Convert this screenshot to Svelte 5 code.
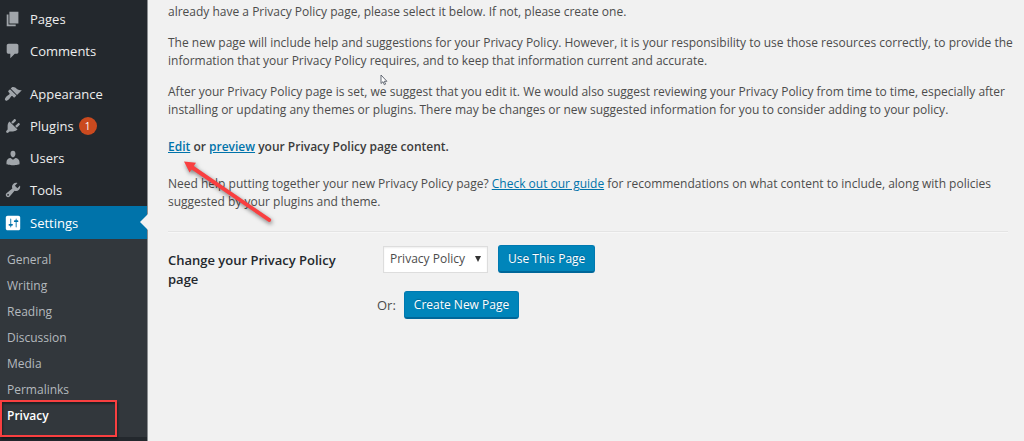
<script>
  const groups = [
    [
      { name: 'Pages', icon: 'pages' },
      { name: 'Comments', icon: 'comments' }
    ],
    [
      { name: 'Appearance', icon: 'appearance' },
      { name: 'Plugins', icon: 'plugins', count: 1 },
      { name: 'Users', icon: 'users' },
      { name: 'Tools', icon: 'tools' },
      { name: 'Settings', icon: 'settings', current: true }
    ]
  ];
  const settings = ['General', 'Writing', 'Reading', 'Discussion', 'Media', 'Permalinks', 'Privacy'];
  const icons = {
    pages: 'M6 15V2h10v13H6zm-1 1h8v2H3V5h2v11z',
    comments: 'M5 2h9q.82 0 1.41.59T16 4v7q0 .82-.59 1.41T14 13h-2l-5 5v-5H5q-.82 0-1.41-.59T3 11V4q0-.82.59-1.41T5 2z',
    appearance: 'M14.48 11.06L7.41 3.99l1.5-1.5c.5-.56 2.3-.47 3.51.32 1.21.8 1.43 1.28 2.91 2.1 1.18.64 2.45 1.26 4.45.85zm-.71.71L6.7 4.7 4.93 6.47c-.39.39-.39 1.02 0 1.41l1.06 1.06c.39.39.39 1.03 0 1.42-.6.6-1.43 1.11-2.21 1.69-.35.26-.7.53-1.01.84C1.43 14.23.4 16.08 1.4 17.07c.99 1 2.84-.03 4.18-1.36.31-.31.58-.66.85-1.02.57-.78 1.08-1.61 1.69-2.21.39-.39 1.02-.39 1.41 0l1.06 1.06c.39.39 1.02.39 1.41 0z',
    plugins: 'M13.11 4.36L9.87 7.6 8 5.73l3.24-3.24c.35-.34 1.05-.2 1.56.32.52.51.66 1.21.31 1.55zm-8 1.77l.91-1.12 9.01 9.01-1.19.84c-.71.71-2.63 1.16-3.82 1.16H6.14L4.9 17.26c-.59.59-1.54.59-2.12 0-.59-.58-.59-1.53 0-2.12l1.24-1.24v-3.88c0-1.13.4-3.19 1.09-3.89zm7.26 3.97l3.24-3.24c.34-.35 1.04-.21 1.55.31.52.51.66 1.21.31 1.55l-3.24 3.25z',
    users: 'M10 9.25c-2.27 0-2.73-3.44-2.73-3.44C7 4.02 7.82 2 9.97 2c2.16 0 2.98 2.02 2.71 3.81 0 0-.41 3.44-2.68 3.44zm0 2.57L12.72 10c2.39 0 4.52 2.33 4.52 4.53v2.49s-3.65 1.13-7.24 1.13c-3.65 0-7.24-1.13-7.24-1.13v-2.49c0-2.25 1.94-4.48 4.47-4.48z',
    tools: 'M16.68 9.77c-1.34 1.34-3.3 1.67-4.95.99l-5.41 6.52c-.99.99-2.59.99-3.58 0s-.99-2.59 0-3.57l6.52-5.42c-.68-1.65-.35-3.61.99-4.95 1.28-1.28 3.12-1.62 4.72-1.06l-2.89 2.89 2.82 2.82 2.86-2.87c.53 1.58.18 3.39-1.08 4.65zM3.81 16.21c.4.39 1.04.39 1.43 0 .4-.4.4-1.04 0-1.43-.39-.4-1.03-.4-1.43 0-.39.39-.39 1.03 0 1.43z',
    settings: 'M18 16V4c0-1.1-.9-2-2-2H4c-1.1 0-2 .9-2 2v12c0 1.1.9 2 2 2h12c1.1 0 2-.9 2-2zM8 11h1c.55 0 1 .45 1 1s-.45 1-1 1H8v1.5c0 .28-.22.5-.5.5s-.5-.22-.5-.5V13H6c-.55 0-1-.45-1-1s.45-1 1-1h1V5.500c0-.28.22-.5.5-.5s.5.22.5.5V11zm5-2h-1c-.55 0-1-.45-1-1s.45-1 1-1h1V5.500c0-.28.22-.5.5-.5s.5.22.5.5V7h1c.55 0 1 .45 1 1s-.45 1-1 1h-1v5.500c0 .28-.22.5-.5.5s-.5-.22-.5-.5V9z'
  };
  let page = $state('Privacy Policy');
</script>

<div class="admin">
  <nav class="sidebar" aria-label="Main menu">
    {#each groups as group}
      <ul class="menu">
        {#each group as item}
          <li>
            <a href="#{item.icon}" class="item" class:current={item.current}>
              <svg viewBox="0 0 20 20" aria-hidden="true"><path d={icons[item.icon]} /></svg>
              <span>{item.name}</span>
              {#if item.count}<span class="count">{item.count}</span>{/if}
            </a>
          </li>
        {/each}
      </ul>
    {/each}
    <ul class="submenu">
      {#each settings as name}
        <li><a href="#{name}" class:active={name === 'Privacy'}>{name}</a></li>
      {/each}
    </ul>
    <div class="frame"></div>
  </nav>

  <main>
    <div class="intro">
      <p>already have a Privacy Policy page, please select it below. If not, please create one.</p>
      <p>The new page will include help and suggestions for your Privacy Policy. However, it is your responsibility to use those resources correctly, to provide the information that your Privacy Policy requires, and to keep that information current and accurate.</p>
      <p>After your Privacy Policy page is set, we suggest that you edit it. We would also suggest reviewing your Privacy Policy from time to time, especially after installing or updating any themes or plugins. There may be changes or new suggested information for you to consider adding to your policy.</p>
      <p class="strong"><a href="#edit">Edit</a> or <a href="#preview">preview</a> your Privacy Policy page content.</p>
      <p>Need help putting together your new Privacy Policy page? <a href="#guide">Check out our guide</a> for recommendations on what content to include, along with policies suggested by your plugins and theme.</p>
    </div>
    <hr />
    <div class="form">
      <label for="policy-page">Change your Privacy Policy page</label>
      <div class="fields">
        <div class="row">
          <span class="picker">
            <select id="policy-page" bind:value={page}>
              <option>Privacy Policy</option>
            </select>
            <svg viewBox="0 0 6 6" aria-hidden="true"><path d="M0 0h6L3 6z" /></svg>
          </span>
          <button type="button">Use This Page</button>
        </div>
        <div class="row create">
          <span>Or:</span>
          <button type="button">Create New Page</button>
        </div>
      </div>
    </div>
  </main>

  <svg class="pointer" viewBox="0 0 8 12" aria-hidden="true">
    <path d="M1 1v8.500l2-1.800 1.300 3 1.300-.6-1.300-2.800h2.600z" fill="#fff" stroke="#555b66" stroke-width=".9" />
  </svg>
  <svg class="arrow" viewBox="0 0 100 70" aria-hidden="true">
    <path d="M4 5.500l12 1.200-2.200 3.400L90.500 62.500q1.200 1 .4 2.400t-2.400.8L11.600 13.500 9.600 16.500z" />
  </svg>
</div>

<style>
  :global(body) {
    margin: 0;
    background: #f1f1f1;
  }
  .admin {
    position: relative;
    display: flex;
    min-height: 100vh;
    overflow: hidden;
    box-sizing: border-box;
    font: 12px/18px "Open Sans", "Noto Sans", sans-serif;
    color: #4c4c4c;
  }
  .sidebar {
    position: relative;
    flex: 0 0 148px;
    padding-top: 3px;
    box-sizing: border-box;
    background: #23282d;
    border-right: 1px solid #8b8e91;
    font-size: 13px;
  }
  ul {
    margin: 0;
    padding: 0;
    list-style: none;
  }
  .menu + .menu {
    margin-top: 11px;
  }
  .item {
    position: relative;
    display: flex;
    align-items: center;
    height: 32px;
    padding-left: 4px;
    color: #eee;
    text-decoration: none;
  }
  .item svg {
    width: 18px;
    height: 18px;
    margin-right: 8px;
    fill: #a0a5aa;
  }
  .current {
    height: 33px;
    background: #0073aa;
    color: #fff;
  }
  .current svg {
    fill: #fff;
  }
  .current::after {
    content: "";
    position: absolute;
    right: -1px;
    top: 8px;
    border: 8px solid transparent;
    border-left: 0;
    border-right-color: #f1f1f1;
  }
  .count {
    width: 18px;
    margin-left: 5px;
    border-radius: 9px;
    background: #ca4a1f;
    color: #fff;
    font-size: 10px;
    text-align: center;
  }
  .submenu {
    padding: 8px 0;
    background: #32373c;
    font-size: 12px;
    line-height: 26px;
  }
  .submenu a {
    display: block;
    padding-left: 7px;
    color: #b4b9be;
    text-decoration: none;
  }
  .submenu .active {
    color: #fff;
    font-weight: 600;
  }
  .frame {
    position: absolute;
    left: 0;
    top: 400px;
    width: 117px;
    height: 37px;
    box-sizing: border-box;
    border: 2px solid #f93f40;
    box-shadow: 1px 2px 2px rgba(0, 0, 0, 0.4), inset 1px 2px 2px rgba(0, 0, 0, 0.4);
  }
  main {
    flex: 1;
    min-width: 0;
    padding: 3px 16px 16px 20px;
  }
  .intro {
    margin-right: -16px;
  }
  p {
    margin: 0 0 13px;
  }
  .intro p:last-child {
    margin-bottom: 0;
  }
  p.strong {
    margin: 19px 0;
    color: #3c3c3c;
    font-weight: 600;
  }
  main a {
    color: #0073aa;
  }
  hr {
    margin: 20px 0 0;
    border: 0;
    border-top: 1px solid #e4e4e4;
    border-bottom: 1px solid #f7f7f7;
  }
  .form {
    display: flex;
    padding-top: 12px;
  }
  label {
    flex: 0 0 170px;
    margin-right: 39px;
    padding-top: 6px;
    color: #23282d;
    font-size: 13px;
    line-height: 19px;
    font-weight: 600;
  }
  .row {
    display: flex;
    align-items: center;
    gap: 10px;
    padding-left: 6px;
  }
  .create {
    gap: 8px;
    margin-top: 18px;
    padding-left: 0;
  }
  .create span {
    font-size: 13px;
  }
  .picker {
    position: relative;
    display: flex;
  }
  select {
    width: 105px;
    height: 27px;
    padding: 0 6px;
    appearance: none;
    border: 1px solid #ddd;
    border-radius: 0;
    background: #fff;
    box-shadow: inset 0 1px 2px rgba(0, 0, 0, 0.07);
    color: #4c4c4c;
    font: inherit;
  }
  .picker svg {
    position: absolute;
    right: 7px;
    top: 10px;
    width: 6px;
    height: 6px;
    fill: #333;
    pointer-events: none;
  }
  button {
    height: 28px;
    padding: 0 9px;
    border: 1px solid #0079b1;
    border-bottom: 2px solid #006799;
    border-radius: 3px;
    background: #0085ba;
    color: #fff;
    font: inherit;
    text-shadow: 0 -1px 1px #006799;
  }
  .pointer {
    position: absolute;
    left: 380px;
    top: 74px;
    width: 8px;
    height: 12px;
  }
  .arrow {
    position: absolute;
    left: 180px;
    top: 156px;
    width: 100px;
    height: 70px;
    fill: #f93f40;
    filter: drop-shadow(1px 2px 2px rgba(0, 0, 0, 0.5));
    pointer-events: none;
  }
</style>
